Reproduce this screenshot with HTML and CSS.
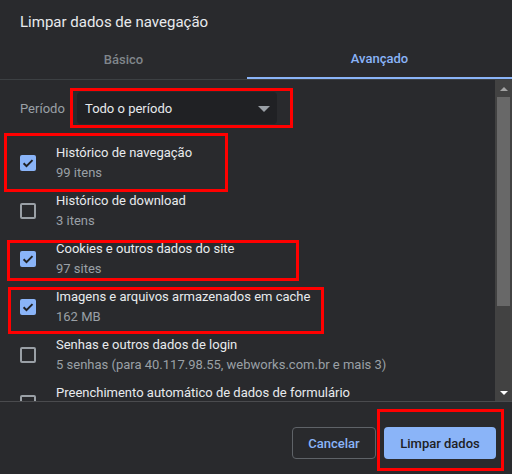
FILE: index.html
```html
<!DOCTYPE html>
<html lang="pt-BR">
<head>
<meta charset="utf-8">
<title>Limpar dados de navegação</title>
<link rel="stylesheet" href="styles.css">
</head>
<body>
<div class="dialog">
  <div class="title">Limpar dados de navegação</div>
  <div class="tabs">
    <div class="tab">Básico</div>
    <div class="tab active">Avançado</div>
  </div>
  <div class="body">
    <div class="content">
      <div class="period">
        <span class="period-label">Período</span>
        <div class="select">
          <span>Todo o período</span>
          <span class="caret"></span>
        </div>
      </div>
      <div class="rows">
        <div class="row">
          <span class="cb checked"><svg viewBox="0 0 16 16" width="16" height="16"><path d="M3.6 8.2l2.9 2.9 6-6" fill="none" stroke="#202124" stroke-width="2"/></svg></span>
          <div class="text"><div class="t1">Histórico de navegação</div><div class="t2">99 itens</div></div>
        </div>
        <div class="row">
          <span class="cb"></span>
          <div class="text"><div class="t1">Histórico de download</div><div class="t2">3 itens</div></div>
        </div>
        <div class="row">
          <span class="cb checked"><svg viewBox="0 0 16 16" width="16" height="16"><path d="M3.6 8.2l2.9 2.9 6-6" fill="none" stroke="#202124" stroke-width="2"/></svg></span>
          <div class="text"><div class="t1">Cookies e outros dados do site</div><div class="t2">97 sites</div></div>
        </div>
        <div class="row">
          <span class="cb checked"><svg viewBox="0 0 16 16" width="16" height="16"><path d="M3.6 8.2l2.9 2.9 6-6" fill="none" stroke="#202124" stroke-width="2"/></svg></span>
          <div class="text"><div class="t1">Imagens e arquivos armazenados em cache</div><div class="t2">162 MB</div></div>
        </div>
        <div class="row">
          <span class="cb"></span>
          <div class="text"><div class="t1">Senhas e outros dados de login</div><div class="t2">5 senhas (para 40.117.98.55, webworks.com.br e mais 3)</div></div>
        </div>
        <div class="row">
          <span class="cb"></span>
          <div class="text"><div class="t1">Preenchimento automático de dados de formulário</div><div class="t2">&nbsp;</div></div>
        </div>
      </div>
    </div>
    <div class="scrollbar">
      <div class="arrow up"></div>
      <div class="thumb-track"><div class="thumb"></div></div>
      <div class="arrow down"></div>
    </div>
  </div>
  <div class="footer">
    <button class="btn cancel">Cancelar</button>
    <button class="btn primary">Limpar dados</button>
  </div>
</div>
<div class="mark m1"></div>
<div class="mark m2"></div>
<div class="mark m3"></div>
<div class="mark m4"></div>
<div class="mark m5"></div>
</body>
</html>
```

FILE: styles.css
```css
html, body {
  margin: 0;
  padding: 0;
}
body {
  width: 512px;
  height: 474px;
  background: #292a2d;
  font-family: Roboto, "Liberation Sans", sans-serif;
  color: #e8eaed;
  overflow: hidden;
  position: relative;
}
.dialog {
  display: flex;
  flex-direction: column;
  height: 474px;
}
.title {
  padding: 12px 20px 6px;
  font-size: 15px;
  line-height: 20px;
  color: #e8eaed;
}
.tabs {
  display: grid;
  grid-template-columns: 247px 1fr;
  border-bottom: 1px solid #3c4043;
}
.tab {
  height: 41px;
  box-sizing: border-box;
  display: flex;
  align-items: center;
  justify-content: center;
  font-size: 13px;
  font-weight: 500;
  color: #80868b;
  padding-top: 1px;
}
.tab.active {
  color: #8ab4f8;
  border-bottom: 2px solid #8ab4f8;
  padding-bottom: 0;
  padding-top: 2px;
}
.body {
  height: 321px;
  display: flex;
  border-bottom: 1px solid #4a4b4e;
  overflow: hidden;
}
.content {
  flex: 1;
  padding-top: 12px;
  overflow: hidden;
}
.period {
  display: flex;
  align-items: center;
  height: 32px;
  padding-left: 20px;
}
.period-label {
  width: 57px;
  font-size: 13px;
  color: #9aa0a6;
}
.select {
  width: 200px;
  height: 32px;
  box-sizing: border-box;
  background: #202124;
  border-radius: 4px;
  display: flex;
  align-items: center;
  justify-content: space-between;
  padding: 0 7px 0 8px;
  font-size: 13px;
  color: #e8eaed;
}
.caret {
  width: 0;
  height: 0;
  border-left: 6px solid transparent;
  border-right: 6px solid transparent;
  border-top: 6px solid #9aa0a6;
  margin-top: 1px;
}
.rows {
  margin-top: 15px;
}
.row {
  height: 48px;
  display: flex;
  align-items: center;
  padding-left: 20px;
  gap: 20px;
}
.cb {
  width: 16px;
  height: 16px;
  box-sizing: border-box;
  border: 2px solid #9aa0a6;
  border-radius: 2px;
  flex: none;
  position: relative;
}
.cb.checked {
  border: none;
  background: #8ab4f8;
}
.cb svg {
  display: block;
}
.text {
  font-size: 13px;
  line-height: 20px;
  white-space: nowrap;
}
.t1 {
  color: #e8eaed;
}
.t2 {
  color: #9aa0a6;
}
.scrollbar {
  width: 17px;
  flex: none;
  background: #424242;
  display: flex;
  flex-direction: column;
}
.arrow {
  height: 17px;
  display: flex;
  align-items: center;
  justify-content: center;
}
.arrow.up::before {
  content: "";
  border-left: 4px solid transparent;
  border-right: 4px solid transparent;
  border-bottom: 4px solid #a3a3a3;
}
.arrow.down::before {
  content: "";
  border-left: 4px solid transparent;
  border-right: 4px solid transparent;
  border-top: 4px solid #ffffff;
}
.thumb-track {
  flex: 1;
  padding: 0 2px;
}
.thumb {
  height: 209px;
  background: #686868;
}
.footer {
  flex: 1;
  display: flex;
  justify-content: flex-end;
  align-items: flex-start;
  gap: 8px;
  padding: 25px 16px 0;
}
.btn {
  height: 32px;
  box-sizing: border-box;
  border-radius: 4px;
  font-family: Roboto, "Liberation Sans", sans-serif;
  font-size: 13px;
  font-weight: 500;
  padding: 0;
  cursor: pointer;
}
.cancel {
  width: 84px;
  background: transparent;
  border: 1px solid #5f6368;
  color: #8ab4f8;
}
.primary {
  width: 112px;
  background: #8ab4f8;
  border: none;
  color: #202124;
}
.mark {
  position: absolute;
  box-sizing: border-box;
  border: 3px solid #ff0000;
}
.m1 { left: 70px; top: 88px; width: 223px; height: 40px; }
.m2 { left: 4px; top: 133px; width: 224px; height: 59px; }
.m3 { left: 7px; top: 240px; width: 292px; height: 41px; }
.m4 { left: 8px; top: 287px; width: 316px; height: 47px; }
.m5 { left: 377px; top: 409px; width: 127px; height: 62px; }
```
